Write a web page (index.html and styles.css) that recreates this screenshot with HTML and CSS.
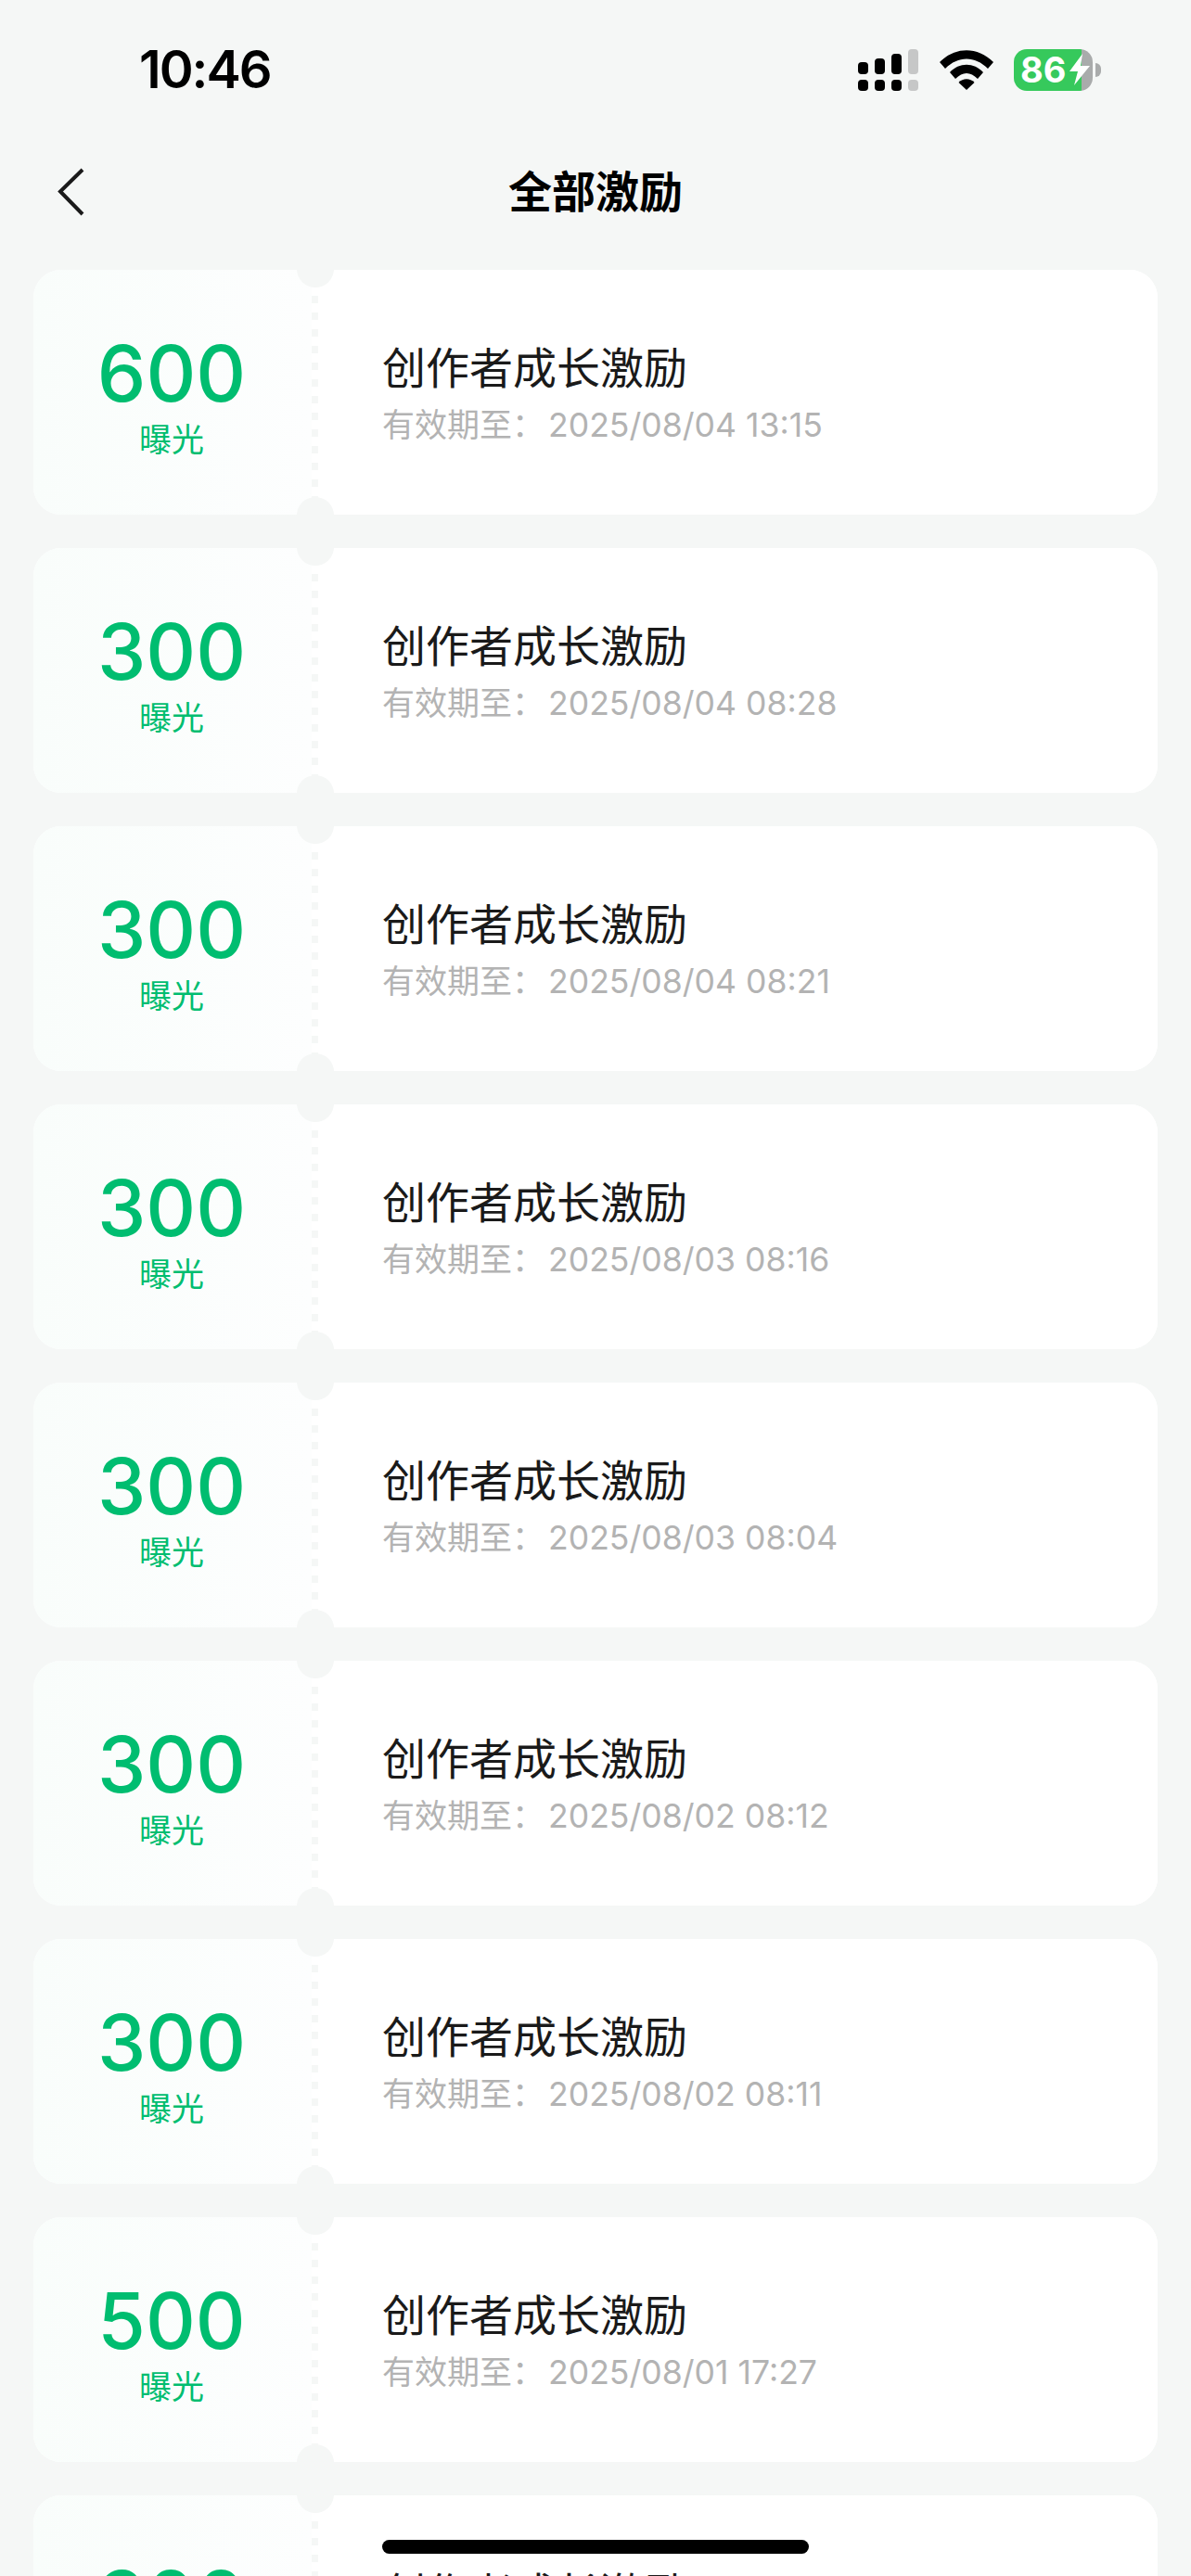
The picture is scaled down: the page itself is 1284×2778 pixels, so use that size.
FILE: index.html
```html
<!DOCTYPE html>
<html lang="zh-CN">
<head>
  <meta charset="UTF-8">
  <meta name="viewport" content="width=device-width, initial-scale=1.0">
  <title>全部激励</title>
  <link rel="stylesheet" href="styles.css">
</head>
<body>
  <div class="status-bar">
    <span class="time">10:46</span>
    <div class="status-icons">
      <svg class="signal" width="65" height="45" viewBox="0 0 65 45">
        <rect x="0" y="14" width="11" height="13" rx="4" fill="#000"/>
        <rect x="18" y="10" width="11" height="17" rx="4" fill="#000"/>
        <rect x="36" y="5" width="11" height="22" rx="4" fill="#000"/>
        <rect x="54" y="0" width="11" height="27" rx="4" fill="#c6c7c7"/>
        <rect x="0" y="33" width="11" height="12" rx="4" fill="#000"/>
        <rect x="18" y="33" width="11" height="12" rx="4" fill="#000"/>
        <rect x="36" y="33" width="11" height="12" rx="4" fill="#000"/>
        <rect x="54" y="33" width="11" height="12" rx="4" fill="#c6c7c7"/>
      </svg>
      <svg class="wifi" width="58" height="43" viewBox="0 0 58 43">
        <path d="M0 13C17 -4 41 -4 58 13L52 20C38 6 20 6 6 20Z" fill="#000"/>
        <path d="M11 24C21 13 37 13 47 24L41 31C33 23 25 23 17 31Z" fill="#000"/>
        <path d="M20.5 35C25 30 33 30 37.5 35L29 43Z" fill="#000"/>
      </svg>
      <div class="battery">
        <span class="battery-level">86</span>
        <svg class="bolt" width="22" height="34" viewBox="0 0 22 34">
          <path d="M14 0L0 19H9L5 34L22 13H12Z" fill="#fff"/>
        </svg>
      </div>
      <span class="battery-cap"></span>
    </div>
  </div>

  <div class="nav">
    <svg class="back" width="30" height="52" viewBox="0 0 30 52">
      <path d="M28 2L4 25.5L28 50" fill="none" stroke="#1a1a1a" stroke-width="4"/>
    </svg>
    <h1 class="nav-title">全部激励</h1>
  </div>

  <div class="list">
    <div class="card">
      <div class="amount"><span class="amount-num">600</span><span class="amount-unit">曝光</span></div>
      <div class="tear"></div>
      <div class="info"><div class="info-title">创作者成长激励</div><div class="info-date">有效期至：<span class="date-num">2025/08/04 13:15</span></div></div>
    </div>
    <div class="card">
      <div class="amount"><span class="amount-num">300</span><span class="amount-unit">曝光</span></div>
      <div class="tear"></div>
      <div class="info"><div class="info-title">创作者成长激励</div><div class="info-date">有效期至：<span class="date-num">2025/08/04 08:28</span></div></div>
    </div>
    <div class="card">
      <div class="amount"><span class="amount-num">300</span><span class="amount-unit">曝光</span></div>
      <div class="tear"></div>
      <div class="info"><div class="info-title">创作者成长激励</div><div class="info-date">有效期至：<span class="date-num">2025/08/04 08:21</span></div></div>
    </div>
    <div class="card">
      <div class="amount"><span class="amount-num">300</span><span class="amount-unit">曝光</span></div>
      <div class="tear"></div>
      <div class="info"><div class="info-title">创作者成长激励</div><div class="info-date">有效期至：<span class="date-num">2025/08/03 08:16</span></div></div>
    </div>
    <div class="card">
      <div class="amount"><span class="amount-num">300</span><span class="amount-unit">曝光</span></div>
      <div class="tear"></div>
      <div class="info"><div class="info-title">创作者成长激励</div><div class="info-date">有效期至：<span class="date-num">2025/08/03 08:04</span></div></div>
    </div>
    <div class="card">
      <div class="amount"><span class="amount-num">300</span><span class="amount-unit">曝光</span></div>
      <div class="tear"></div>
      <div class="info"><div class="info-title">创作者成长激励</div><div class="info-date">有效期至：<span class="date-num">2025/08/02 08:12</span></div></div>
    </div>
    <div class="card">
      <div class="amount"><span class="amount-num">300</span><span class="amount-unit">曝光</span></div>
      <div class="tear"></div>
      <div class="info"><div class="info-title">创作者成长激励</div><div class="info-date">有效期至：<span class="date-num">2025/08/02 08:11</span></div></div>
    </div>
    <div class="card">
      <div class="amount"><span class="amount-num">500</span><span class="amount-unit">曝光</span></div>
      <div class="tear"></div>
      <div class="info"><div class="info-title">创作者成长激励</div><div class="info-date">有效期至：<span class="date-num">2025/08/01 17:27</span></div></div>
    </div>
    <div class="card">
      <div class="amount"><span class="amount-num">300</span><span class="amount-unit">曝光</span></div>
      <div class="tear"></div>
      <div class="info"><div class="info-title">创作者成长激励</div><div class="info-date">有效期至：<span class="date-num">2025/08/01 08:10</span></div></div>
    </div>
  </div>

  <div class="home-indicator"></div>
</body>
</html>
```

FILE: styles.css
```css
:root {
  --bg-color: #f5f7f6;
  --green: #00bd70;
  --text-color: #1a1a1a;
  --muted: #b3b3b3;
}

html, body {
  height: 2778px;
  margin: 0;
  padding: 0;
  overflow: hidden;
  background-color: var(--bg-color);
  color: var(--text-color);
  font-family: Inter, "Noto Sans CJK SC", sans-serif;
}

body {
  position: relative;
}

.status-bar {
  display: flex;
  justify-content: space-between;
  align-items: center;
  box-sizing: border-box;
  height: 150px;
  padding: 0 97px 0 150px;
}

.time {
  font-size: 56px;
  font-weight: 600;
  letter-spacing: -2px;
  color: #000;
}

.status-icons {
  display: flex;
  align-items: center;
}

.wifi {
  margin-left: 23px;
}

.battery {
  display: flex;
  align-items: center;
  box-sizing: border-box;
  width: 85px;
  height: 45px;
  margin-left: 22px;
  padding-left: 7px;
  border-radius: 14px;
  background: linear-gradient(to right, #36c95c 73px, #a9abab 73px);
}

.battery-level {
  color: #fff;
  font-size: 38px;
  font-weight: 700;
  line-height: 45px;
}

.bolt {
  margin-left: 4px;
}

.battery-cap {
  width: 6px;
  height: 15px;
  margin-left: 3px;
  border-radius: 0 8px 8px 0;
  background-color: #a9abab;
}

.nav {
  display: flex;
  align-items: center;
  justify-content: center;
  position: relative;
  box-sizing: border-box;
  height: 116px;
  padding-bottom: 10px;
}

.back {
  position: absolute;
  left: 61px;
  top: 31px;
}

.nav-title {
  margin: 0;
  font-size: 47px;
  font-weight: 700;
  color: #000;
}

.list {
  display: flex;
  flex-direction: column;
  gap: 36px;
  padding: 25px 36px 0;
}

.card {
  display: flex;
  flex-shrink: 0;
  position: relative;
  height: 264px;
  border-radius: 30px;
  overflow: hidden;
  background-color: #fff;
}

/* the two punched holes on the tear line */
.card::before,
.card::after {
  content: "";
  position: absolute;
  left: 284px;
  width: 40px;
  height: 40px;
  border-radius: 50%;
  background-color: var(--bg-color);
}

.card::before {
  top: -21px;
}

.card::after {
  bottom: -21px;
}

.amount {
  display: flex;
  flex-direction: column;
  align-items: center;
  box-sizing: border-box;
  width: 300px;
  padding: 67px 2px 0 0;
  background: linear-gradient(to right, #f9fdfb, #fdfefe);
  color: var(--green);
}

.amount-num {
  font-size: 83.5px;
  font-weight: 500;
  line-height: 90px;
}

.amount-unit {
  font-size: 35px;
  line-height: 44px;
  margin-top: 4px;
}

.tear {
  width: 7px;
  background: linear-gradient(to bottom, #fff 10px, var(--bg-color) 10px);
  background-size: 7px 18px;
}

.info {
  flex: 1;
  display: flex;
  flex-direction: column;
  padding: 69px 0 0 69px;
  background-color: #fff;
}

.info-title {
  font-size: 47px;
  line-height: 73px;
}

.info-date {
  font-size: 35px;
  line-height: 50px;
  color: var(--muted);
}

.date-num {
  font-size: 35.6px;
  margin-left: 4px;
}

.home-indicator {
  position: absolute;
  left: 412px;
  top: 2739px;
  width: 460px;
  height: 15px;
  border-radius: 8px;
  background-color: #000;
}
```
